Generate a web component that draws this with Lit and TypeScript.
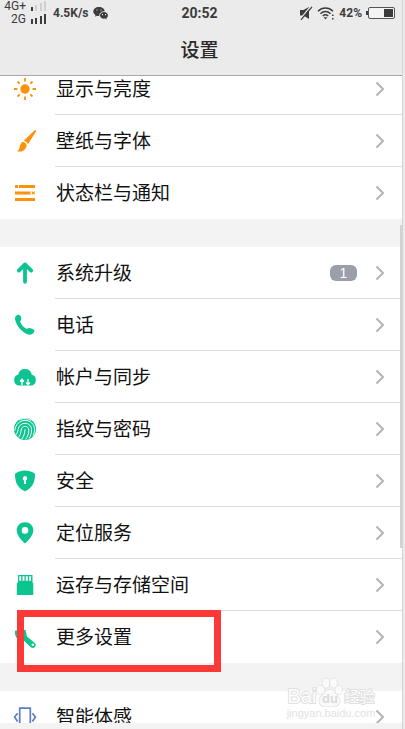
import { LitElement, html, css, svg, nothing, TemplateResult } from "lit";
import { customElement, property } from "lit/decorators.js";

interface Item {
  icon: string;
  label: string;
  badge?: number;
  marked?: boolean;
}

const GROUPS: Item[][] = [
  [
    { icon: "sun", label: "显示与亮度" },
    { icon: "brush", label: "壁纸与字体" },
    { icon: "bars", label: "状态栏与通知" },
  ],
  [
    { icon: "arrow", label: "系统升级", badge: 1 },
    { icon: "phone", label: "电话" },
    { icon: "cloud", label: "帐户与同步" },
    { icon: "finger", label: "指纹与密码" },
    { icon: "shield", label: "安全" },
    { icon: "pin", label: "定位服务" },
    { icon: "card", label: "运存与存储空间" },
    { icon: "wrench", label: "更多设置", marked: true },
  ],
  [{ icon: "motion", label: "智能体感" }],
];

const ORANGE = "#fb9207";
const GREEN = "#0cc490";
const BLUE = "#5b7cc9";

const ICONS: Record<string, TemplateResult> = {
  sun: svg`<circle cx="12" cy="12" r="4.7" fill=${ORANGE} />
    <path d="M12 1v3.4M12 19.6V23M1 12h3.4M19.6 12H23M4.5 4.5l2.2 2.2M17.3 17.3l2.2 2.2M4.5 19.5l2.2-2.2M17.3 6.7l2.2-2.2"
      stroke=${ORANGE} stroke-width="1.8" fill="none" />`,
  brush: svg`<path d="M22.8 1.2c.5.4.4 1 0 1.600L15 15.200c-.9-1.800-2.500-3.100-4.400-3.500L21.500 1.500c.5-.5.9-.6 1.300-.3z" fill=${ORANGE} />
    <path d="M9.600 12.800c2 .3 3.700 1.700 4.100 3.500-.2 1.300-.8 2.300-1.300 3.100C10.500 22.500 7 23.200 3.900 22.200c1.900-.8 2.300-2.200 2.800-4.300.5-1.900 1.200-3.900 2.900-5.100z" fill=${ORANGE} />`,
  bars: svg`<path d="M2 4h3v3H2zM6 4h16v3H6zM2 10.500h15.500v3H2zM2 17h20v3H2z" fill=${ORANGE} />
    <path d="M18.800 10.600l2.800 2.800M21.600 10.600l-2.800 2.800" stroke=${ORANGE} stroke-width="1.200" />`,
  arrow: svg`<path d="M12 4v16.800M5.800 9.600L12 3.400l6.200 6.200" fill="none" stroke=${GREEN}
      stroke-width="3.800" stroke-linecap="round" stroke-linejoin="round" />`,
  phone: svg`<path d="M3.200 2.800C4.500 1.400 6.300 1.300 7.300 2.800c.9 1.400 1.300 3.200.8 4.300-.3.700-1 1-.8 1.800.9 2.700 3.400 5.500 6.200 6.900.8.300 1.300-.7 2.200-.8 1.500-.2 3.500.6 4.900 1.500 1.100.8.9 2.200 0 3.300-1.200 1.700-3 2.300-4.900 1.800C9.300 19.900 3.500 13 2.200 7c-.3-1.700-.1-3.200 1-4.200z" fill=${GREEN} />`,
  cloud: svg`<path d="M6.500 20.500a5.500 5.500 0 0 1-1.300-10.800A6.900 6.900 0 0 1 18.800 9.700a5.500 5.500 0 0 1-1.300 10.800z" fill=${GREEN} />
    <path d="M9 20v-4.800M7 16.500l2-2.200 2 2.200M15 14v4.800M13 17.500l2 2.200 2-2.200" fill="none" stroke="#fff" stroke-width="1.300" />`,
  finger: svg`<circle cx="12" cy="12" r="11" fill=${GREEN} />
    <path d="M1.800 13.500C2.600 7.600 6.500 3.400 12 3.400c5.600 0 9.500 4 9.500 9.100 0 2.400-.6 4.500-1.500 6.300M3 17.800c1.500-2 1.800-3.500 2.200-5.600C5.900 8.500 8.500 6.300 12 6.300c3.800 0 6.600 2.800 6.600 6.500 0 3.200-.9 5.900-2.500 8.600M5.500 20.400c2-2.600 2.300-4.800 2.700-7.300.3-2.300 1.700-3.800 3.900-3.800 2.300 0 3.700 1.700 3.700 3.900 0 3.500-1.200 6.500-3.300 9.300M8.800 22c2.300-3.200 3-5.700 3.300-9.700M6 2.900c3.900-1.900 8.700-1.700 12 .6"
      fill="none" stroke="#fff" stroke-width="1" />`,
  shield: svg`<path d="M12 1.500c3.200 0 6.600 1 9.300 2.800.6.400.7.900.7 1.700-.1 7.500-2.900 13.300-10 16.200C4.900 19.300 2.100 13.500 2 6c0-.8.100-1.300.7-1.700C5.400 2.500 8.800 1.500 12 1.500z" fill=${GREEN} />
    <path d="M12 7.100a2.300 2.300 0 0 1 1 4.300V15h-2v-3.600a2.300 2.300 0 0 1 1-4.300z" fill="#fff" />`,
  pin: svg`<path fill-rule="evenodd" d="M12 1.200c4.700 0 8.300 3.500 8.300 8 0 4.800-4.600 10-8.300 13.300C8.300 19.200 3.700 14 3.700 9.200c0-4.500 3.600-8 8.300-8zm0 4.900a3.300 3.300 0 1 0 0 6.600 3.300 3.300 0 0 0 0-6.600z" fill=${GREEN} />`,
  card: svg`<path d="M5 2h14.500v7.500l.8.800V21c0 .6-.4 1-1 1H4.800c-.6 0-1-.4-1-1V10.300l1.200-.8z" fill=${GREEN} />
    <path d="M7.200 3.200v4.600M10.500 3.200v4.600M13.800 3.200v4.600M17.100 3.200v4.600" stroke="#fff" stroke-width="2" />`,
  wrench: svg`<path fill-rule="evenodd" d="M2 5.800l2-.6 3 4.300 2.800-1L10 4.300l2.700.900 1.200 6.300 7.600 6.200c1.500 1.300 1.600 3 .5 4.200-1.200 1.300-3 1.300-4.300.1L9.800 14.700 4.500 14C2.500 12 1.600 9 2 5.800zM19.800 18.400a1.300 1.300 0 1 0 0 2.600 1.300 1.300 0 0 0 0-2.600z" fill=${GREEN} />`,
  motion: svg`<path d="M6.700 22V3.200h10.600V22M4.600 8.200L1.600 12l3 4.500M19.400 8.200l3 3.800-3 4.500" fill="none" stroke=${BLUE} stroke-width="1.700" />`,
};

@customElement("setting-row")
export class SettingRow extends LitElement {
  @property({ attribute: false }) item!: Item;

  static styles = css`
    :host {
      display: block;
      position: relative;
      background: #fff;
    }
    .row {
      display: flex;
      align-items: stretch;
      gap: 18px;
      width: 100%;
      height: 52px;
      padding: 0 0 0 13px;
      border: 0;
      background: none;
      color: #111;
      font: 19px/28px "Noto Sans CJK SC", sans-serif;
      text-align: left;
    }
    .icon {
      flex: none;
      align-self: center;
      width: 24px;
      height: 24px;
    }
    .body {
      flex: 1;
      display: flex;
      align-items: center;
      border-bottom: 1px solid #dedede;
      padding-right: 17px;
    }
    :host(.last) .body {
      border-color: transparent;
    }
    .label {
      flex: 1;
      padding: 0 0 2px 1px;
    }
    .badge {
      width: 27px;
      height: 16px;
      margin-right: 18px;
      border-radius: 6px;
      background: #9a9faa;
      color: #fff;
      font: 14px/16px "Liberation Sans", sans-serif;
      text-align: center;
    }
    .chevron {
      flex: none;
      width: 10px;
      height: 16px;
    }
    .mark {
      position: absolute;
      box-sizing: border-box;
      top: -1px;
      left: 17px;
      width: 204px;
      height: 62px;
      border: 7px solid #fb3a38;
      z-index: 2;
      pointer-events: none;
    }
  `;

  render() {
    const { icon, label, badge, marked } = this.item;
    return html`
      <button class="row" type="button">
        <svg class="icon" viewBox="0 0 24 24" aria-hidden="true">${ICONS[icon]}</svg>
        <span class="body">
          <span class="label">${label}</span>
          ${badge ? html`<span class="badge">${badge}</span>` : nothing}
          <svg class="chevron" viewBox="0 0 10 16" aria-hidden="true">
            <path d="M1.500 1.500L8 8l-6.500 6.500" fill="none" stroke="#b4b4b4" stroke-width="2" />
          </svg>
        </span>
      </button>
      ${marked ? html`<div class="mark"></div>` : nothing}
    `;
  }
}

@customElement("status-bar")
export class StatusBar extends LitElement {
  static styles = css`
    :host {
      display: grid;
      grid-template-columns: 1fr auto 1fr;
      align-items: center;
      height: 24px;
      color: #3c3c3c;
      font: bold 12px/12px Roboto, sans-serif;
    }
    .side {
      display: flex;
      align-items: center;
    }
    .end {
      justify-content: flex-end;
      gap: 4px;
    }
    .sims {
      display: grid;
      justify-items: end;
      width: 22px;
      font-weight: 400;
      line-height: 13px;
    }
    .signal {
      width: 17px;
      height: 24px;
      margin: 0 6px 0 4px;
    }
    .chat {
      width: 15px;
      height: 14px;
      margin-left: 4px;
    }
    .time {
      font-size: 14px;
      line-height: 24px;
    }
    .mute {
      width: 14px;
      height: 14px;
    }
    .wifi {
      width: 18px;
      height: 14px;
    }
    .battery {
      width: 29px;
      height: 12px;
    }
  `;

  render() {
    return html`
      <div class="side">
        <div class="sims"><span>4G+</span><span>2G</span></div>
        <svg class="signal" viewBox="0 0 17 24" aria-hidden="true">
          <path d="M1 6h2v4H1zM1 18h2v5H1zM5 17h2v6H5zM10 15h2v8h-2zM14 13h2v10h-2z" fill="#3c3c3c" />
          <path d="M5 4h2v6H5zM10 2h2v8h-2zM14 0h2v10h-2z" fill="#cfcfcf" />
        </svg>
        <span>4.5K/s</span>
        <svg class="chat" viewBox="0 0 15 14" aria-hidden="true">
          <path d="M6 1c3.200 0 5.500 1.800 5.700 4.200C8.600 5.100 6.200 7 6.300 9.900c-.8.100-1.600 0-2.400-.2L2 10.800l.5-1.900C1.100 8 .3 6.900.3 5.500.3 3 2.800 1 6 1z" fill="#3c3c3c" />
          <path d="M11 6c2.200 0 3.900 1.500 3.900 3.400 0 1.100-.6 2-1.500 2.600l.3 1.400-1.500-.8c-2.900.6-5.200-1-5.200-3.200C7 7.500 8.800 6 11 6z" fill="#3c3c3c" />
          <path d="M3.500 4h1M7.500 4h1M9 8.700h1M12 8.700h1" stroke="#ebebeb" stroke-width="1.200" />
        </svg>
      </div>
      <span class="time">20:52</span>
      <div class="side end">
        <svg class="mute" viewBox="0 0 14 14" aria-hidden="true">
          <path d="M1 4h3.500L10 1v12L4.500 9.500H1z" fill="#3c3c3c" />
          <path d="M1 13.500L11.500.5" stroke="#ebebeb" stroke-width="1.200" />
          <path d="M2 13.800L13 .8" stroke="#3c3c3c" stroke-width="1.300" />
        </svg>
        <svg class="wifi" viewBox="0 0 18 14" aria-hidden="true">
          <path d="M1 5.200c4.200-4.300 10.800-4.300 15 0M3.500 7.700c2.900-2.800 7.100-2.800 10 0M5.800 10c1.700-1.500 3.700-1.500 5.400 0" fill="none" stroke="#3c3c3c" stroke-width="1.500" />
          <path d="M6.700 11.200h3.600L8.500 13.500zM15 8.500h1.500V10H15zM15 12h1.500v1.500H15z" fill="#3c3c3c" />
        </svg>
        <span>42%</span>
        <svg class="battery" viewBox="0 0 29 12" aria-hidden="true">
          <rect x="2.500" y=".5" width="26" height="11" rx="1.500" fill="#f4f4f4" stroke="#555" />
          <path d="M0 4h2v4H0zM18 2h9v8h-9z" fill="#3c3c3c" />
        </svg>
      </div>
    `;
  }
}

@customElement("app-root")
export class AppRoot extends LitElement {
  static styles = css`
    :host {
      display: flex;
      height: 100vh;
      background: #f3f3f3;
      font-family: "Noto Sans CJK SC", sans-serif;
    }
    .screen {
      flex: 1;
      min-width: 0;
      display: flex;
      flex-direction: column;
      position: relative;
    }
    .edge {
      width: 2px;
      border-left: 1px solid #d4d4d4;
      background: #ebebeb;
    }
    .header {
      flex: none;
      padding: 0 7px 0 4px;
      background: #ebebeb;
      border-bottom: 1px solid #a8a8a8;
    }
    .title {
      margin: 0;
      color: #2a2a2a;
      font-size: 19px;
      font-weight: 500;
      line-height: 49px;
      padding-bottom: 2px;
      text-align: center;
    }
    .view {
      flex: 1;
      min-height: 0;
      position: relative;
      overflow: hidden;
    }
    .groups {
      display: grid;
      gap: 28px;
      margin-top: -13px;
    }
    .thumb {
      position: absolute;
      top: 23%;
      right: 0;
      width: 2px;
      height: 50%;
      background: #d2d2d2;
    }
    .foot {
      flex: none;
      height: 6px;
    }
    .brand {
      position: absolute;
      right: 26px;
      bottom: 10px;
      width: 90px;
      display: grid;
      justify-items: center;
      color: #fdfdfd;
      -webkit-text-stroke: 2px #e0e0e0;
      paint-order: stroke fill;
      pointer-events: none;
    }
    .logo {
      display: flex;
      align-items: flex-end;
      font: 20px/22px "Liberation Sans", sans-serif;
    }
    .paw {
      width: 27px;
      height: 30px;
    }
    .du {
      font: bold 13px "Liberation Sans", sans-serif;
      -webkit-text-stroke: 0;
    }
    .cn {
      font: 15px/22px "Noto Sans CJK SC", sans-serif;
      margin-left: 1px;
    }
    .site {
      color: #e2e2e2;
      font: 11px/12px "Liberation Sans", sans-serif;
      -webkit-text-stroke: 0;
    }
  `;

  render() {
    return html`
      <main class="screen">
        <header class="header">
          <status-bar></status-bar>
          <h1 class="title">设置</h1>
        </header>
        <div class="view">
          <div class="groups">
            ${GROUPS.map(
              (group) => html`<section>
                ${group.map(
                  (item, i) => html`<setting-row
                    class=${i === group.length - 1 ? "last" : ""}
                    .item=${item}
                  ></setting-row>`
                )}
              </section>`
            )}
          </div>
          <div class="thumb"></div>
        </div>
        <div class="foot"></div>
        <div class="brand">
          <div class="logo">
            <span>Bai</span>
            <svg class="paw" viewBox="0 0 27 30">
              <g fill="#fafafa" stroke="#dcdcdc" stroke-width="1.200">
                <ellipse cx="4.500" cy="13" rx="3.500" ry="4.500" />
                <ellipse cx="10" cy="6" rx="3.500" ry="4.800" />
                <ellipse cx="17.500" cy="6" rx="3.500" ry="4.800" />
                <ellipse cx="22.800" cy="13" rx="3.500" ry="4.500" />
                <path d="M13.500 12.500c4 0 5.500 4 8 6.500 4 4 2.500 10-3 10h-10c-5.500 0-7-6-3-10 2.500-2.500 4-6.500 8-6.500z" />
              </g>
              <text class="du" x="6" y="26" fill="#dadada">du</text>
            </svg>
            <span class="cn">经验</span>
          </div>
          <span class="site">jingyan.baidu.com</span>
        </div>
      </main>
      <div class="edge"></div>
    `;
  }
}
